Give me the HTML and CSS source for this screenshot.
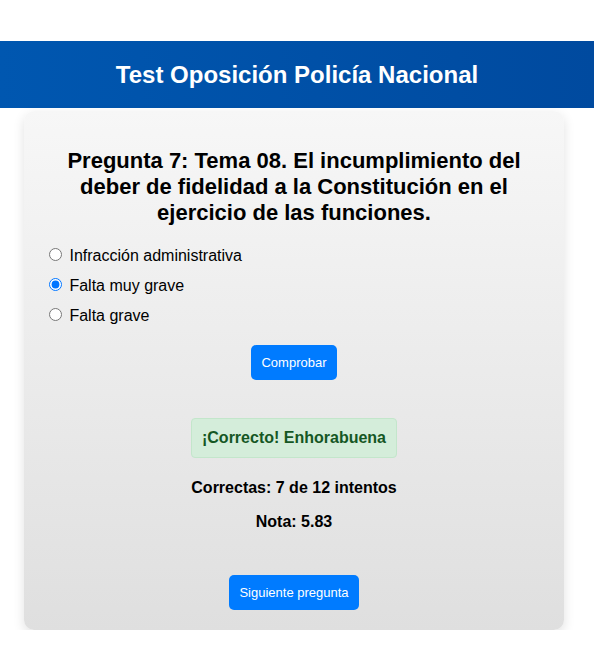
FILE: index.html
```html
<!DOCTYPE html>
<html lang="es">
<head>
    <meta charset="UTF-8">
    <meta name="viewport" content="width=device-width, initial-scale=1.0">
    <title>Test Oposición Policía Nacional</title>
    <link rel="stylesheet" href="styles.css">
</head>
<body>
    <div class="header">
        <h1>Test Oposición Policía Nacional</h1>
    </div>

    <div class="quiz-container">
        <h2 class="question">Pregunta 7: Tema 08. El incumplimiento del deber de fidelidad a la Constitución en el ejercicio de las funciones.</h2>
        <form id="quizForm">
            <label class="option"><input type="radio" name="answer" value="0"> Infracción administrativa</label>
            <label class="option"><input type="radio" name="answer" value="1" checked> Falta muy grave</label>
            <label class="option"><input type="radio" name="answer" value="2"> Falta grave</label>
            <button type="button" class="btn">Comprobar</button>
        </form>

        <div class="feedback">¡Correcto! Enhorabuena</div>
        <p class="score">Correctas: 7 de 12 intentos</p>
        <p class="score">Nota: 5.83</p>

        <button type="button" class="btn next-btn">Siguiente pregunta</button>
    </div>
</body>
</html>
```

FILE: styles.css
```css
body {
    font-family: Arial, "Liberation Sans", sans-serif;
    background-color: #ffffff;
    margin: 0;
    padding: 41px 0 0 0;
    color: #000;
}
.header {
    background: linear-gradient(90deg, #0057b0, #004a9f); /* Dark blue bar */
    color: white;
    height: 67px;
    display: flex;
    align-items: center;
    justify-content: center;
}
.header h1 {
    font-size: 24px;
    margin: 0;
}
.quiz-container {
    width: 500px;
    margin: 3px 0 0 24px;
    padding: 20px 20px 20px 20px;
    background: linear-gradient(180deg, #f7f7f7, #dfdfdf);
    border-radius: 10px;
    box-shadow: 0 4px 12px rgba(0, 0, 0, 0.12);
    text-align: center;
}
.question {
    font-size: 22px;
    line-height: 26px;
    margin: 17px 0 19px 0;
}
.option {
    display: block;
    text-align: left;
    font-size: 16px;
    height: 30px;
}
.option input {
    margin: 3px 3px 0 5px;
}
.btn {
    background-color: #007bff;
    color: white;
    border: none;
    border-radius: 5px;
    font-family: inherit;
    font-size: 13px;
    padding: 9px 10px;
    height: 35px;
    cursor: pointer;
    margin-top: 10px;
}
.btn:hover {
    background-color: #0069d9;
}
.feedback {
    display: inline-block;
    margin-top: 38px;
    padding: 10px;
    background-color: #d4edda;
    border: 1px solid #c3e6cb;
    border-radius: 4px;
    color: #155724;
    font-weight: bold;
    font-size: 16px;
}
.score {
    font-weight: bold;
    font-size: 16px;
    margin: 16px 0 0 0;
}
.feedback + .score {
    margin-top: 21px;
}
.next-btn {
    margin-top: 44px;
}
```
